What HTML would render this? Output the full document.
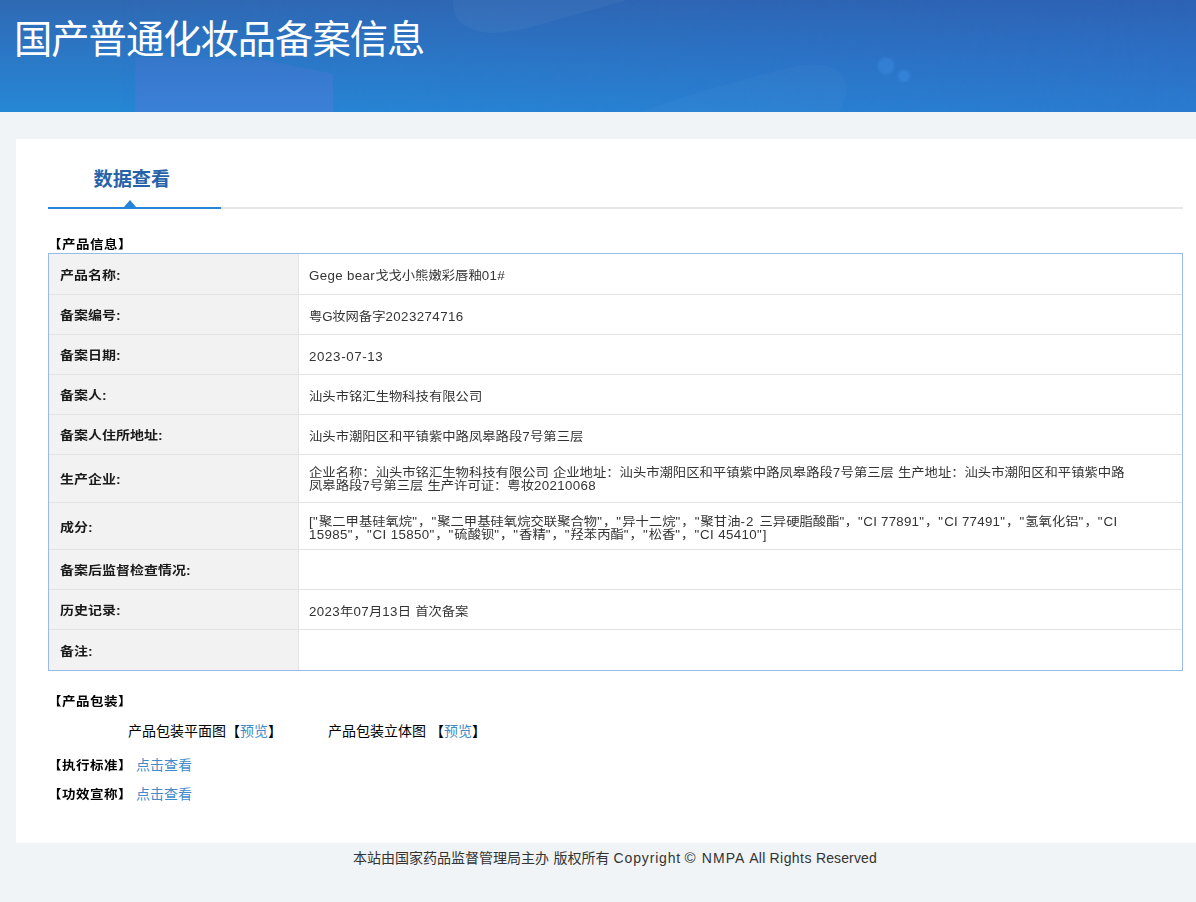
<!DOCTYPE html>
<html lang="zh-CN">
<head>
<meta charset="utf-8">
<title>国产普通化妆品备案信息</title>
<style>
*{box-sizing:border-box;margin:0;padding:0}
html,body{width:1196px;height:902px;overflow:hidden}
body{background:#f0f4f7;font-family:"Liberation Sans","Noto Sans CJK SC",sans-serif;color:#333;font-size:14px;position:relative}
.hdr{position:absolute;left:0;top:0;width:1196px;height:112px;background:linear-gradient(180deg,#2e66b3 0%,#2c72c4 50%,#2585d6 100%);overflow:hidden}
.hdr h1{position:absolute;left:14px;top:14px;font-size:38.3px;letter-spacing:-1px;font-weight:400;color:#fff;line-height:52px;white-space:nowrap}
.card{position:absolute;left:16px;top:139px;width:1180px;height:704px;background:#fff}
.tabline{position:absolute;left:32px;top:68px;width:1135px;height:2px;background:#e6e6e6}
.tabact{position:absolute;left:32px;top:68px;width:173px;height:2px;background:#2584d8}
.tabtri{position:absolute;left:107.5px;top:61px;width:0;height:0;border-left:6.5px solid transparent;border-right:6.5px solid transparent;border-bottom:7px solid #2584d8}
.tabtxt{position:absolute;left:77.5px;top:27px;font-size:19.2px;font-weight:700;color:#2762a8;line-height:28px;white-space:nowrap}
.sec{position:absolute;left:32px;font-weight:400;color:#000;font-size:14px;line-height:18px;white-space:nowrap}
.sec b{font-weight:700;font-size:13.5px;letter-spacing:.5px;display:inline-block;transform:scaleY(.9);transform-origin:50% 55%}
.tb{position:absolute;left:32px;top:114px;width:1135px;height:418px;border:1px solid #99bbe8}
.r{position:absolute;left:0;width:1133px}
.s{position:absolute;left:0;width:1133px;height:1px;background:#e3e3e3}
.l{position:absolute;left:0;top:0;width:250px;height:100%;background:#f2f2f2;border-right:1px solid #e3e3e3;font-weight:700;color:#1a1a1a;font-size:14px;letter-spacing:0;display:flex;align-items:center;padding-left:11px;white-space:nowrap}
.v{position:absolute;left:250px;top:0;right:0;height:100%;display:flex;align-items:center;padding-left:10px;font-size:13.333px;line-height:13.333px;color:#333;white-space:nowrap}
.vt{position:relative;display:inline-block;transform:scaleY(.92);transform-origin:50% 50%}
.l span{display:inline-block;transform:scaleY(.86);transform-origin:50% 50%;position:relative;top:.5px}
.e{letter-spacing:.35px;position:relative;top:-.4px}
.q{letter-spacing:1.1px;position:relative;top:-.4px}
.sp{letter-spacing:.3px}
a{color:#428bca;text-decoration:none}
.ft{position:absolute;left:0;top:848px;width:1196px;height:20px;font-size:14px;color:#333;line-height:20px;white-space:nowrap}
.ft span{position:absolute;top:0}
</style>
</head>
<body>
<div class="hdr">
<svg width="1196" height="112" viewBox="0 0 1196 112" style="position:absolute;left:0;top:0">
  <defs>
    <linearGradient id="g1" x1="0" y1="0" x2="0" y2="1"><stop offset="0" stop-color="#2f69b4"/><stop offset=".5" stop-color="#2b78c6"/><stop offset="1" stop-color="#2687d5"/></linearGradient>
    <linearGradient id="g3" x1="0" y1="0" x2="0" y2="1"><stop offset="0" stop-color="#2d62b4"/><stop offset=".5" stop-color="#2c6fc4"/><stop offset="1" stop-color="#2a7bd0"/></linearGradient>
    <linearGradient id="gm" x1="0" y1="0" x2="1" y2="0"><stop offset=".1" stop-color="#000"/><stop offset="1" stop-color="#fff"/></linearGradient>
    <mask id="mk"><rect width="1196" height="112" fill="url(#gm)"/></mask>
    <linearGradient id="g2" x1="0" y1="0" x2="0" y2="1"><stop offset="0" stop-color="#3a76cb" stop-opacity=".75"/><stop offset=".5" stop-color="#3b7bd2"/><stop offset="1" stop-color="#3c80d8"/></linearGradient>
    <filter id="bl" x="-50%" y="-50%" width="200%" height="200%"><feGaussianBlur stdDeviation="1.2"/></filter>
  </defs>
  <rect width="1196" height="112" fill="url(#g1)"/>
  <rect width="1196" height="112" fill="url(#g3)" mask="url(#mk)"/>
  <polygon points="135.5,57 264,60 333,74 333,112 135.5,112" fill="url(#g2)" opacity=".92"/>
  <path d="M453,0 L453,6 Q455,31 492,33 Q512,33 545,23 L628,0 Z" fill="#fff" opacity=".04"/>
  <path d="M640,112 Q700,90 800,65 Q850,60 846,95 L840,112 Z" fill="#fff" opacity=".028"/>
  <circle cx="886" cy="66" r="8.5" fill="#3c90e6" opacity=".4" filter="url(#bl)"/>
  <circle cx="904" cy="76" r="6" fill="#3c90e6" opacity=".5" filter="url(#bl)"/>
</svg>
<h1>国产普通化妆品备案信息</h1></div>
<div class="card">
  <div class="tabline"></div><div class="tabact"></div><div class="tabtri"></div>
  <div class="tabtxt">数据查看</div>
  <div class="sec" style="top:96px"><b>【产品信息】</b></div>
  <div class="tb">
<div class="r" style="top:0px;height:40px"><div class="l"><span>产品名称:</span></div><div class="v"><span class="vt" style="top:2px"><span class="e">Gege bear</span>戈戈小熊嫩彩唇釉<span class="e">01#</span></span></div></div>
<div class="s" style="top:40px"></div>
<div class="r" style="top:41px;height:39px"><div class="l"><span>备案编号:</span></div><div class="v"><span class="vt" style="top:2px">粤<span class="e" style="letter-spacing:-0.5px">G</span>妆网备字<span class="e" style="letter-spacing:0.39px">2023274716</span></span></div></div>
<div class="s" style="top:80px"></div>
<div class="r" style="top:81px;height:39px"><div class="l"><span>备案日期:</span></div><div class="v"><span class="vt" style="top:2px"><span class="e" style="letter-spacing:0.62px">2023-07-13</span></span></div></div>
<div class="s" style="top:120px"></div>
<div class="r" style="top:121px;height:39px"><div class="l"><span>备案人:</span></div><div class="v"><span class="vt" style="top:2px">汕头市铭汇生物科技有限公司</span></div></div>
<div class="s" style="top:160px"></div>
<div class="r" style="top:161px;height:39px"><div class="l"><span>备案人住所地址:</span></div><div class="v"><span class="vt" style="top:2px">汕头市潮阳区和平镇紫中路凤皋路段<span class="e">7</span>号第三层</span></div></div>
<div class="s" style="top:200px"></div>
<div class="r" style="top:201px;height:47px"><div class="l"><span>生产企业:</span></div><div class="v"><span class="vt" style="top:1.5px;line-height:14.13px">企业名称：汕头市铭汇生物科技有限公司<span class="sp"> </span>企业地址：汕头市潮阳区和平镇紫中路凤皋路段<span class="e">7</span>号第三层<span class="sp"> </span>生产地址：汕头市潮阳区和平镇紫中路<br>凤皋路段<span class="e">7</span>号第三层<span class="sp"> </span>生产许可证：粤妆<span class="e">20210068</span></span></div></div>
<div class="s" style="top:248px"></div>
<div class="r" style="top:249px;height:46px"><div class="l"><span>成分:</span></div><div class="v"><span class="vt" style="top:3px;line-height:14.13px"><span class="e">[</span><span class="q">&quot;</span>聚二甲基硅氧烷<span class="q">&quot;</span>，<span class="q">&quot;</span>聚二甲基硅氧烷交联聚合物<span class="q">&quot;</span>，<span class="q">&quot;</span>异十二烷<span class="q">&quot;</span>，<span class="q">&quot;</span>聚甘油<span class="e" style="letter-spacing:1.15px">-2 </span>三异硬脂酸酯<span class="q" style="letter-spacing:0.55px">&quot;</span>，<span class="q" style="letter-spacing:0.55px">&quot;</span><span class="e" style="letter-spacing:0.21px">CI 77891</span><span class="q">&quot;</span>，<span class="q">&quot;</span><span class="e" style="letter-spacing:0.25px">CI 77491</span><span class="q">&quot;</span>，<span class="q">&quot;</span>氢氧化铝<span class="q">&quot;</span>，<span class="q">&quot;</span><span class="e">CI</span><br><span class="e">15985</span><span class="q" style="letter-spacing:1.0px">&quot;</span>，<span class="q" style="letter-spacing:1.0px">&quot;</span><span class="e">CI 15850</span><span class="q" style="letter-spacing:1.0px">&quot;</span>，<span class="q" style="letter-spacing:1.0px">&quot;</span>硫酸钡<span class="q" style="letter-spacing:1.0px">&quot;</span>，<span class="q" style="letter-spacing:1.0px">&quot;</span>香精<span class="q" style="letter-spacing:1.0px">&quot;</span>，<span class="q" style="letter-spacing:1.0px">&quot;</span>羟苯丙酯<span class="q" style="letter-spacing:1.0px">&quot;</span>，<span class="q" style="letter-spacing:1.0px">&quot;</span>松香<span class="q" style="letter-spacing:1.0px">&quot;</span>，<span class="q" style="letter-spacing:1.0px">&quot;</span><span class="e">CI 45410</span><span class="q" style="letter-spacing:1.0px">&quot;</span><span class="e">]</span></span></div></div>
<div class="s" style="top:295px"></div>
<div class="r" style="top:296px;height:39px"><div class="l"><span>备案后监督检查情况:</span></div><div class="v"><span class="vt" style="top:2px"></span></div></div>
<div class="s" style="top:335px"></div>
<div class="r" style="top:336px;height:39px"><div class="l"><span>历史记录:</span></div><div class="v"><span class="vt" style="top:2px"><span class="e">2023</span>年<span class="e">07</span>月<span class="e">13</span>日<span class="sp"> </span>首次备案</span></div></div>
<div class="s" style="top:375px"></div>
<div class="r" style="top:376px;height:40px"><div class="l"><span>备注:</span></div><div class="v"><span class="vt" style="top:2px"></span></div></div>
  </div>
  <div class="sec" style="top:553px"><b>【产品包装】</b></div>
  <div class="sec n" style="left:112px;top:583px">产品包装平面图【<a>预览</a>】</div>
  <div class="sec n" style="left:312px;top:583px">产品包装立体图 【<a>预览</a>】</div>
  <div class="sec" style="top:617px"><b>【执行标准】</b> <a>点击查看</a></div>
  <div class="sec" style="top:646px"><b>【功效宣称】</b> <a>点击查看</a></div>
</div>
<div class="ft"><span style="left:353px">本站由国家药品监督管理局主办</span><span style="left:553.5px">版权所有</span><span class="w" style="left:613.6px;letter-spacing:.84px">Copyright</span><span class="w" style="left:684.6px;font-size:15px">©</span><span class="w" style="left:701.8px;letter-spacing:1.05px">NMPA</span><span class="w" style="left:749.2px;letter-spacing:.3px">All</span><span class="w" style="left:769.6px;letter-spacing:.42px">Rights</span><span class="w" style="left:816px;letter-spacing:.11px">Reserved</span></div>
</body>
</html>
